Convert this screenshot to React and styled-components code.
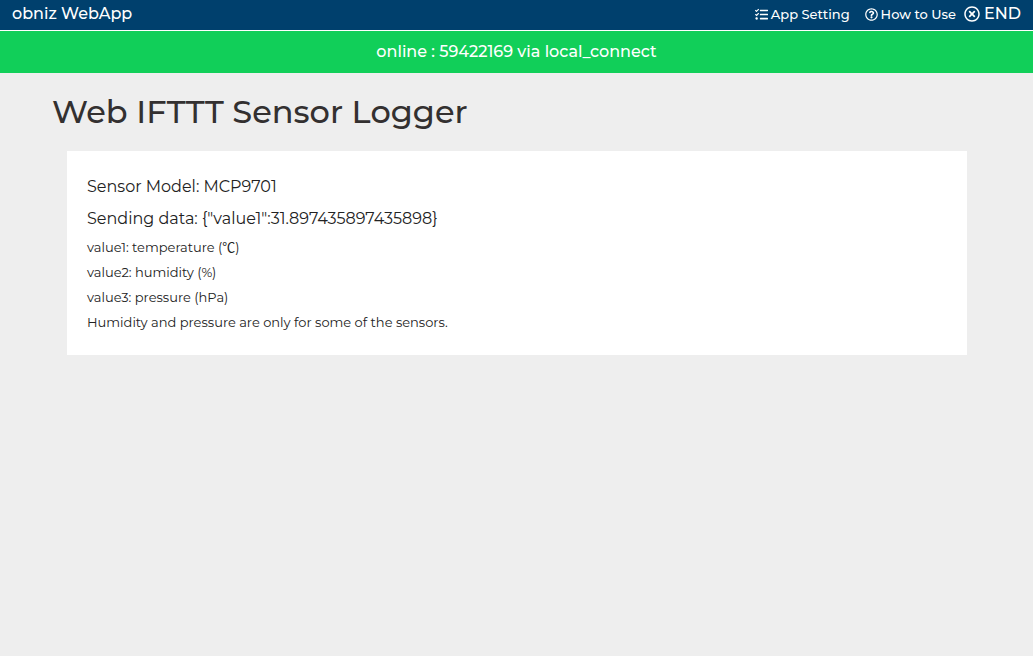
import React from 'react';
import styled, { createGlobalStyle } from 'styled-components';
import { FaTasks, FaRegQuestionCircle, FaRegTimesCircle } from 'react-icons/fa';

const GlobalStyle = createGlobalStyle`
  body {
    margin: 0;
    background: #eeeeee;
    color: #333030;
    font-family: Montserrat, "Noto Sans CJK JP", sans-serif;
  }
`

const Header = styled.header`
  display: flex;
  align-items: center;
  justify-content: space-between;
  height: 30px;
  padding: 0 12px;
  background: #00406d;
  border-bottom: 1px solid #ffffff;
  color: #ffffff;
`

const Brand = styled.a`
  color: inherit;
  font-size: 16px;
  font-weight: 500;
  line-height: 28px;
  padding-bottom: 2px;
  text-decoration: none;
`

const Nav = styled.nav`
  display: flex;
  align-items: center;
`

const NavLink = styled.a`
  display: flex;
  align-items: center;
  gap: 3px;
  padding-bottom: 2px;
  margin-right: ${props => props.$gap}px;
  color: inherit;
  font-size: 13px;
  font-weight: 500;
  line-height: 16px;
  text-decoration: none;
`

const EndButton = styled.button`
  display: flex;
  align-items: center;
  gap: 4px;
  padding: 0 0 3px;
  border: 0;
  background: none;
  color: inherit;
  font: inherit;
  font-size: 16px;
  font-weight: 500;
  cursor: pointer;
`

const Status = styled.div`
  background: #11cf59;
  color: #ffffff;
  font-size: 16px;
  font-weight: 500;
  line-height: 24px;
  padding: 9px 12px;
  text-align: center;
`

const Main = styled.main`
  padding: 16px 52px;
`

const Title = styled.h1`
  margin: 0;
  font-size: 32px;
  font-weight: 500;
  line-height: 46px;
`

const Card = styled.section`
  margin: 16px 14px 0 15px;
  padding: 20px;
  background: #ffffff;
  color: #222222;
`

const Reading = styled.p`
  margin: 0;
  font-size: 16px;
  line-height: 32px;
`

const Note = styled.p`
  margin: 0;
  font-size: 13px;
  line-height: 25px;
`

const notes = [
    'value1: temperature (℃)',
    'value2: humidity (%)',
    'value3: pressure (hPa)',
    'Humidity and pressure are only for some of the sensors.',
];

function App() {
    const data = { value1: 31.897435897435898 };

    return (
        <>
            <GlobalStyle />
            <Header>
                <Brand href="#">obniz WebApp</Brand>
                <Nav>
                    <NavLink href="#setting" $gap={15}><FaTasks size={13} />App Setting</NavLink>
                    <NavLink href="#help" $gap={8}><FaRegQuestionCircle size={13} />How to Use</NavLink>
                    <EndButton type="button"><FaRegTimesCircle size={16} />END</EndButton>
                </Nav>
            </Header>
            <Status role="status">online : 59422169 via local_connect</Status>
            <Main>
                <Title>Web IFTTT Sensor Logger</Title>
                <Card>
                    <Reading>Sensor Model: MCP9701</Reading>
                    <Reading>Sending data: {JSON.stringify(data)}</Reading>
                    {notes.map(note => <Note key={note}>{note}</Note>)}
                </Card>
            </Main>
        </>
    );
}

export default App;
